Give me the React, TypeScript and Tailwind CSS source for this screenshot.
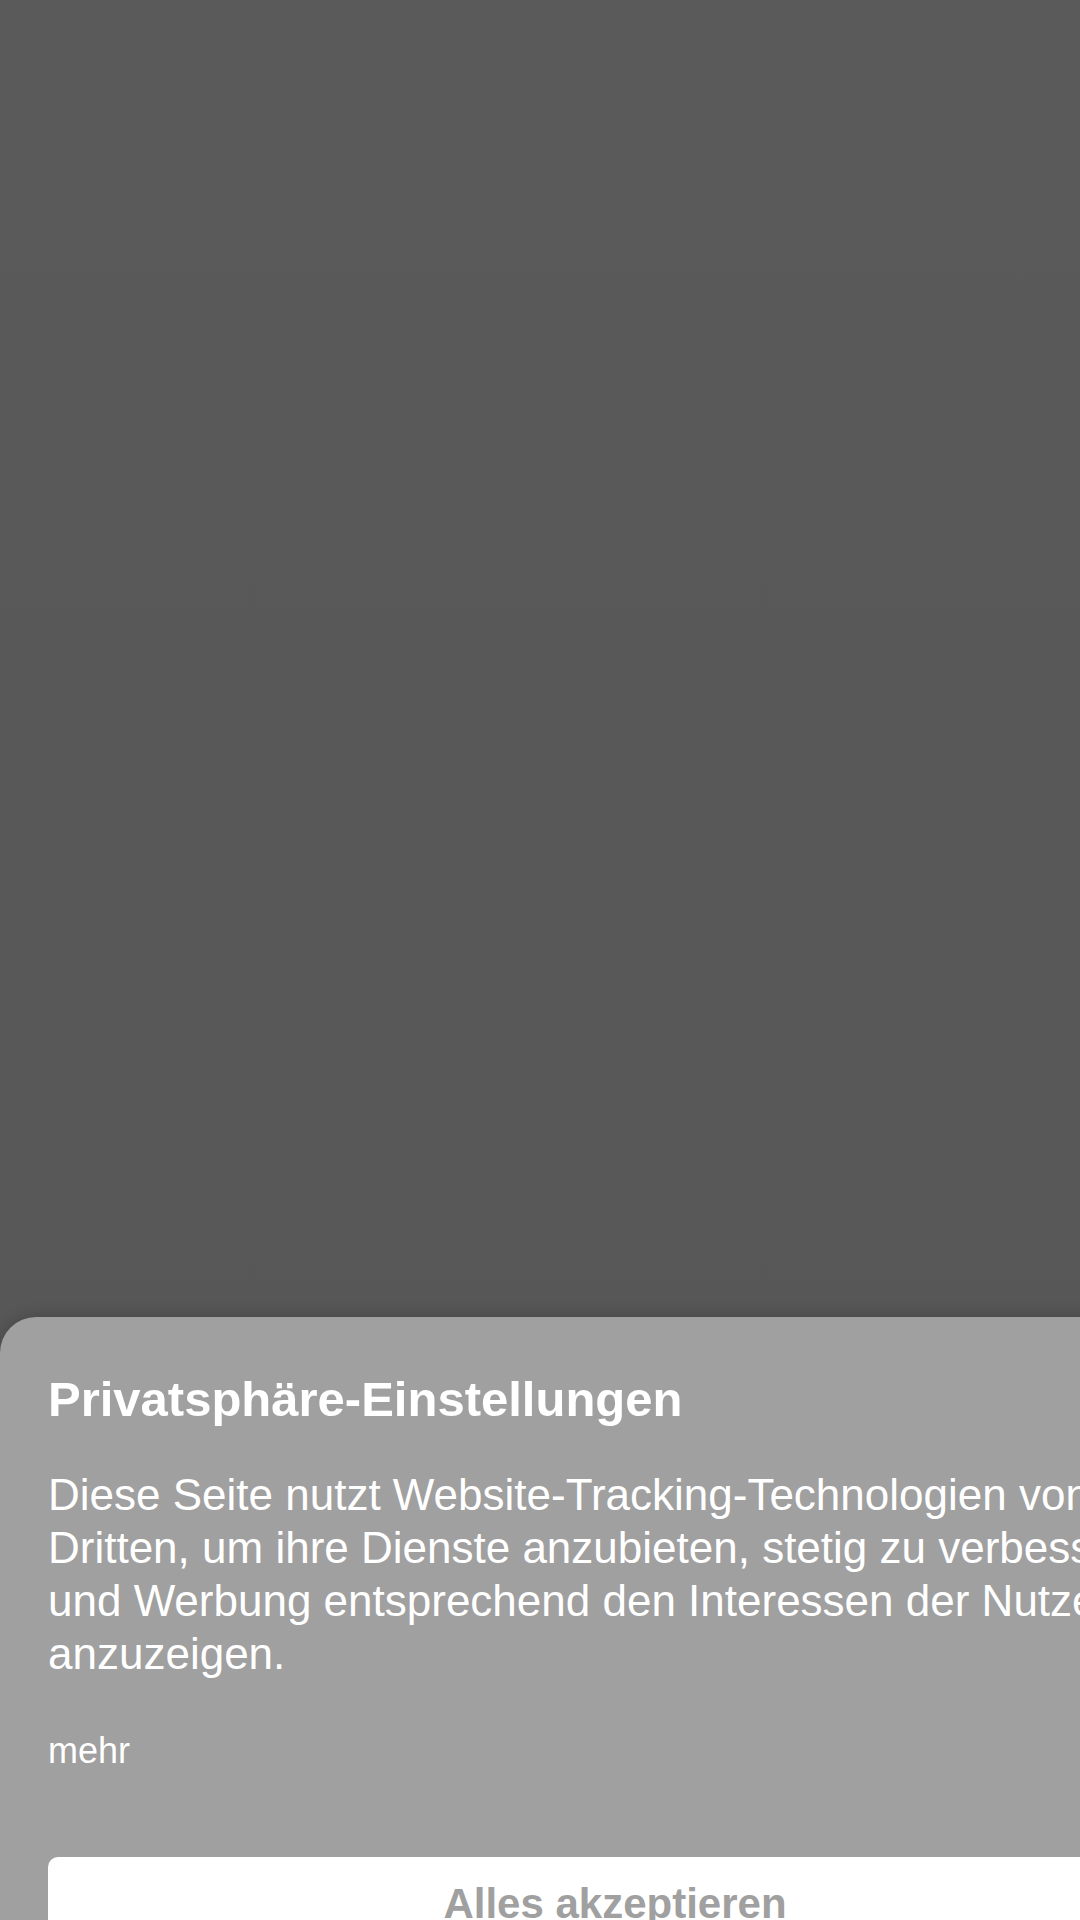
import React from "react";

export default function App() {
  return (
    <div className="w-[1080px] h-[1920px] overflow-hidden flex flex-col bg-[linear-gradient(180deg,#5a5a5a_0%,#575757_70%,#545454_100%)] font-['Liberation_Sans',Arial,sans-serif]">
      <div className="h-[1317px] shrink-0" />
      <div className="w-[1230px] shrink-0 bg-[#a0a0a0] rounded-tl-[36px] rounded-tr-[36px] shadow-[0_-2px_14px_rgba(0,0,0,0.18)] px-[48px] pt-[53px] pb-[48px] flex flex-col">
        <h1 className="text-white font-bold text-[49px] leading-[58px] m-0">
          Privatsphäre-Einstellungen
        </h1>
        <p className="mt-[40px] text-white text-[44px] leading-[53px]">
          Diese Seite nutzt Website-Tracking-Technologien von Dritten, um ihre Dienste anzubieten, stetig zu verbessern, und Werbung entsprechend den Interessen der Nutzer anzuzeigen.
        </p>
        <a className="mt-[50px] text-white text-[36px] leading-[42px] self-start cursor-pointer">
          mehr
        </a>
        <button className="mt-[85px] w-full bg-white rounded-[10px] pt-[22px] pb-[26px] text-[#a0a0a0] font-bold text-[42px] leading-[50px] text-center">
          Alles akzeptieren
        </button>
      </div>
    </div>
  );
}
